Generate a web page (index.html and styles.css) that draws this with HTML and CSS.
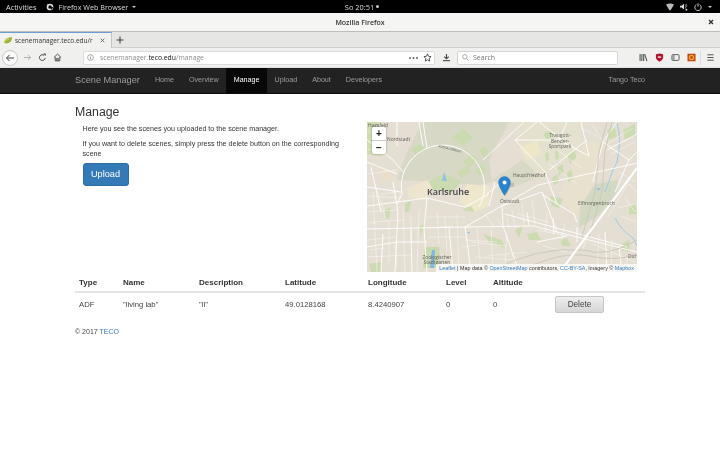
FILE: index.html
```html
<!DOCTYPE html>
<html lang="en">
<head>
<meta charset="utf-8">
<title>Mozilla Firefox</title>
<link rel="stylesheet" href="styles.css">
</head>
<body>
<header class="gnome">
  <div class="gnome-left">
    <span class="gnome-text">Activities</span>
    <span class="gnome-app">
      <svg class="fx-logo" viewBox="0 0 10 10"><circle cx="5" cy="5" r="3.2" fill="none" stroke="#ddd" stroke-width="2"/><path d="M1 1.5 L4 3 L2 5z" fill="#ddd"/><path d="M7 9 L9 5 L5.5 5z" fill="#111"/></svg>
      <span class="gnome-text gnome-app-name">Firefox Web Browser</span>
      <i class="caret"></i>
    </span>
  </div>
  <div class="gnome-clock"><span class="gnome-text">So 20:51</span><i class="dot"></i></div>
  <div class="gnome-right">
    <svg class="sys" viewBox="0 0 10 9"><path d="M0 1.5 Q5 -1 10 1.5 L5.8 8.5 H4.2z" fill="#bbb"/></svg>
    <svg class="sys" viewBox="0 0 10 9"><path d="M0 3 H2 L5 .5 V7.5 L2 5 H0z" fill="#ddd"/><path d="M6.5 1.5 Q8 4 6.5 6.5 M7.5 0.5 Q9.5 4 7.5 5" stroke="#888" fill="none"/><rect x="7" y="6.8" width="2" height="2" fill="#eee"/></svg>
    <svg class="sys" viewBox="0 0 10 10"><path d="M3 2 A4 4 0 1 0 7 2" fill="none" stroke="#ddd" stroke-width="1.1"/><path d="M5 .5 V4.5" stroke="#ddd" stroke-width="1.1"/></svg>
    <i class="caret"></i>
  </div>
</header>

<div class="titlebar">
  <span class="title">Mozilla Firefox</span>
  <svg class="close" viewBox="0 0 6 6"><path d="M1 1 L5 5 M5 1 L1 5" stroke="#333" stroke-width="1.4"/></svg>
</div>

<div class="tabstrip">
  <div class="tab">
    <svg class="favicon" viewBox="0 0 9 8"><path d="M0 7 Q0 2 8 1 Q8 7 2 7.5z" fill="#9cb52f"/><path d="M0 7 Q1 4 5 3" stroke="#e3d35a" fill="none"/></svg>
    <span class="tab-label">scenemanager.teco.edu/r</span>
    <svg class="tab-x" viewBox="0 0 6 6"><path d="M.8 .8 L5.2 5.2 M5.2 .8 L.8 5.2" stroke="#555" stroke-width="1"/></svg>
  </div>
  <svg class="plus" viewBox="0 0 8 8"><path d="M4 .5 V7.5 M.5 4 H7.5" stroke="#444" stroke-width="1.1"/></svg>
</div>

<div class="toolbar">
  <div class="nav-btns">
    <span class="back"><svg viewBox="0 0 10 10"><path d="M9 5 H1.5 M4.5 2 L1.5 5 L4.5 8" fill="none" stroke="#444" stroke-width="1"/></svg></span>
    <svg class="tool" viewBox="0 0 10 10"><path d="M1 5 H8.5 M5.5 2 L8.5 5 L5.5 8" fill="none" stroke="#aaa" stroke-width="1"/></svg>
    <svg class="tool" viewBox="0 0 10 10"><path d="M8 5.5 A3.2 3.2 0 1 1 6.8 2.6" fill="none" stroke="#444" stroke-width="1.1"/><path d="M5.8 .6 H8.6 V3.4z" fill="#444"/></svg>
    <svg class="tool" viewBox="0 0 10 10"><path d="M1 5 L5 1.2 L9 5 M2.5 4.5 V8.7 H7.5 V4.5 M4.2 8.7 V6 H5.8 V8.7" fill="none" stroke="#444" stroke-width="1"/></svg>
  </div>
  <div class="urlbar">
    <svg class="info" viewBox="0 0 8 8"><circle cx="4" cy="4" r="3.3" fill="none" stroke="#777" stroke-width=".7"/><path d="M4 3.4 V6 M4 2 V2.8" stroke="#777" stroke-width=".8"/></svg>
    <span class="url"><span class="url-dim">scenemanager.</span><span class="url-host">teco.edu</span><span class="url-dim">/manage</span></span>
    <svg class="url-dots" viewBox="0 0 9 2"><circle cx="1" cy="1" r=".9" fill="#555"/><circle cx="4.5" cy="1" r=".9" fill="#555"/><circle cx="8" cy="1" r=".9" fill="#555"/></svg>
    <svg class="tool" viewBox="0 0 10 10"><path d="M5 1 L6.2 3.7 L9 4 L6.9 6 L7.5 9 L5 7.5 L2.5 9 L3.1 6 L1 4 L3.8 3.7z" fill="none" stroke="#444" stroke-width="1"/></svg>
  </div>
  <svg class="tool dl" viewBox="0 0 10 10"><path d="M5 1 V6 M2.5 4 L5 6.5 L7.5 4" fill="none" stroke="#444" stroke-width="1.2"/><path d="M1 8.5 H9" stroke="#444" stroke-width="1.2"/></svg>
  <div class="searchbar">
    <svg class="lens" viewBox="0 0 8 8"><circle cx="3.2" cy="3.2" r="2.5" fill="none" stroke="#888" stroke-width=".8"/><path d="M5 5 L7.5 7.5" stroke="#888" stroke-width=".8"/></svg>
    <span class="search-text">Search</span>
  </div>
  <div class="tool-icons">
    <svg class="tool" viewBox="0 0 10 10"><path d="M1.2 1 V9 M3.2 1 V9 M5.2 1 V9" stroke="#555" stroke-width="1.2"/><path d="M6.3 1.2 L8.8 9" stroke="#555" stroke-width="1.2"/></svg>
    <svg class="tool" viewBox="0 0 10 10"><path d="M1 1.5 L5 .5 L9 1.5 V5.5 Q8.5 8 5 9.7 Q1.5 8 1 5.5z" fill="#b5132b"/><rect x="3" y="3.5" width="4" height="2" rx=".8" fill="#f3c6cc"/></svg>
    <svg class="tool" viewBox="0 0 10 10"><rect x="1" y="1.8" width="8" height="6.4" rx="1.2" fill="none" stroke="#555"/><path d="M1.5 2.3 H4 V7.7 H1.5z" fill="#999"/></svg>
    <svg class="tool" viewBox="0 0 10 10"><rect x=".5" y=".8" width="9" height="8.4" fill="#c5491a"/><circle cx="5" cy="5" r="2.3" fill="none" stroke="#f0b428" stroke-width="1.3"/></svg>
    <span class="tool-sep"></span>
    <svg class="tool" viewBox="0 0 10 10"><path d="M1.5 2 H8.5 M1.5 5 H8.5 M1.5 8 H8.5" stroke="#555" stroke-width="1.1"/></svg>
  </div>
</div>

<nav class="navbar">
  <div class="nav-left">
    <a class="brand">Scene Manager</a>
    <a class="nav-item">Home</a>
    <a class="nav-item">Overview</a>
    <a class="nav-item active">Manage</a>
    <a class="nav-item">Upload</a>
    <a class="nav-item">About</a>
    <a class="nav-item">Developers</a>
  </div>
  <a class="nav-user">Tango Teco</a>
</nav>

<main class="container">
  <div class="top-row">
    <section class="intro">
      <h1 class="heading">Manage</h1>
      <div class="intro-body">
        <p class="para">Here you see the scenes you uploaded to the scene manager.</p>
        <p class="para">If you want to delete scenes, simply press the delete button on the corresponding scene</p>
        <a class="btn-upload">Upload</a>
      </div>
    </section>
    <div class="map">
      <svg class="map-art" viewBox="0 0 270 150">
        <rect width="270" height="150" fill="#e5ded3"/>
        <path d="M0 0 H14 V34 L0 32z" fill="#cfdcb0"/>
        <path d="M55 0 H142 L122 38 L125 60 L110 64 L76 60 L30 58 L40 30z" fill="#d7d9c6"/>
        <path d="M125 58 L155 38 L178 53 L146 65z" fill="#d7d9c6"/>
        <path d="M228 62 L251 58 L250 70 L232 93 L212 106 L213 85z" fill="#d2d9c2"/>
        <path d="M148 0 L216 0 L212 28 L176 58 L156 38z" fill="#e4e1cf"/>
        <path d="M216 20 L236 20 L226 60 L208 96 L192 72z" fill="#e8e1ce"/>
        <path d="M40 66 L60 58 L66 66 L58 78 L42 76z" fill="#ede5cd"/>
        <path d="M100 62 L122 64 L122 84 L108 90 L92 80z" fill="#efe7cc"/>
        <path d="M62 60 Q78 46 94 60 L86 70 L66 68z" fill="#ccdab2"/>
        <path d="M14 42 L26 56 L16 60z" fill="#ecdfc9"/>
        <path d="M152 26 L170 18 L174 32 L160 38z" fill="#ede6c9"/>
        <path d="M58 125 L72 125 L74 146 L56 146z" fill="#c9d9ae"/>
        <g fill="#c9dbac" opacity=".85">
          <path d="M84 16 L96 6 L106 16 L96 24z"/>
          <path d="M44 27 L54 22 L58 28 L50 33z"/>
          <path d="M96 40 L104 32 L110 38 L102 46z"/>
          <path d="M90 50 L100 44 L104 50 L94 56z"/>
          <path d="M108 48 L116 42 L120 50 L112 54z"/>
          <path d="M112 28 L118 24 L122 32 L116 35z"/>
          <path d="M176 12 L184 8 L188 14 L180 18z"/>
          <path d="M240 8 L247 4 L250 14 L243 18z"/>
          <path d="M256 8 L268 2 L268 14 L258 18z"/>
          <path d="M200 34 L208 28 L209 36 L203 42z"/>
          <path d="M190 46 L195 42 L197 50 L192 53z"/>
          <path d="M185 56 L190 52 L192 60 L187 63z"/>
          <path d="M200 50 L205 48 L206 58 L201 60z"/>
          <path d="M178 32 L181 30 L182 38 L179 40z"/>
          <path d="M188 30 L191 28 L192 36 L189 38z"/>
          <path d="M183 74 L196 77 L192 86 L185 84z"/>
          <path d="M116 112 L135 118 L138 126 L122 120z"/>
          <path d="M18 88 L24 85 L22 96 L18 98z"/>
          <path d="M38 82 L44 78 L42 90 L38 90z"/>
          <path d="M52 105 L58 102 L54 115z"/>
          <path d="M94 88 L104 84 L108 90z"/>
          <path d="M148 108 L156 104 L152 116z"/>
          <path d="M192 118 L200 116 L204 124 L196 124z"/>
          <path d="M268 82 L262 84 L262 92 L270 92z"/>
          <path d="M255 122 L262 118 L263 130 L255 128z"/>
          <path d="M160 112 L170 110 L174 118 L162 118z"/>
          <path d="M2 142 L14 140 L14 150 L4 150z"/>
        </g>
        <path d="M250 1 Q255 18 250 40 L246 48 M246 48 L238 70" fill="none" stroke="#9ccbe8" stroke-width="1"/>
        <path d="M248 96 Q254 108 266 116 L270 124" fill="none" stroke="#9ccbe8" stroke-width="1"/>
        <path d="M77 50 Q79 55 80 59 L75 59z" fill="#8fc3e6"/>
        <path d="M65 128 L68 128 L67 146 L63 146z" fill="#7fb9e2"/>
        <path d="M230 66 L234 66 L231 69z M190 40 L192 40 L191 42z M100 110 L103 110 L102 112z" fill="#8fc3e6"/>
        <g fill="none" stroke="#fff" stroke-width=".45" opacity=".9">
          <path d="M0 8 L16 18 M0 28 L18 24 M0 52 L30 48 M8 62 L20 100 M0 90 L30 88 M0 118 L30 115 M0 135 L44 133 M22 100 L22 140 M36 85 L38 150 M52 88 L50 150 M70 90 L72 122 M90 92 L92 150 M60 95 L98 95 M62 115 L100 115 M110 106 L114 150 M124 106 L126 150 M104 120 L140 124 M108 135 L148 138 M145 88 L148 106 M155 80 L157 103 M165 78 L168 103 M180 90 L178 110 M198 102 L194 120 M220 112 L216 128 M232 112 L230 150 M245 118 L244 150 M262 130 L258 150 M240 22 L266 6 M244 32 L268 20 M252 50 L268 60 M262 60 L240 96 M180 6 L208 26 M190 28 L215 46 M182 42 L210 62"/>
          <path d="M6 70 L10 150 M14 72 L30 70 M6 100 L36 98 M44 92 L44 122 M60 106 L86 104 M78 94 L80 130 M98 118 L130 120 M118 92 L128 106 M130 96 L136 106 M140 96 L142 106 M150 92 L182 100 M170 108 L200 114 M176 124 L200 130 M120 134 L160 130 M140 112 L138 146 M250 86 L268 82 M254 94 L270 100 M225 2 L236 20 M214 6 L230 14 M262 62 L270 70 M258 76 L268 90 M226 122 L268 140 M2 74 L34 76 M0 100 L10 102 M28 120 L30 146 M4 128 L18 126 M95 125 L110 123"/>
        </g>
        <g fill="none" stroke="#fff" stroke-width=".9">
          <path d="M30 82 L35 72 A41.5 41.5 0 1 1 112 85"/>
          <path d="M56 0 L60 26 M52 0 L56 24"/>
          <path d="M157 0 L116 38"/>
          <path d="M0 18 L26 38 L36 50 M0 40 L30 52"/>
          <path d="M0 84 L60 76 L98 85 L122 72"/>
          <path d="M0 107 L98 105 L171 63 L271 41"/>
          <path d="M28 150 L31 90 L26 60 M60 150 L57 107 L60 76 M98 105 L104 150"/>
          <path d="M135 84 L136 104 L152 150"/>
          <path d="M16 112 L14 150 M44 107 L45 150 M82 106 L86 150"/>
          <path d="M135 84 L175 70 L190 110 M175 72 L190 82 L207 92 L210 100"/>
          <path d="M98 105 L166 104 L270 130 M138 92 L260 125 M160 90 L162 104 M186 96 L187 112 M210 105 L210 120"/>
          <path d="M200 0 L192 18 L222 34 L214 0 M148 18 L192 18 M172 0 L200 22"/>
          <path d="M148 18 L178 50 L190 82 M170 0 L148 18 M182 48 L220 18"/>
          <path d="M236 20 L262 38 L248 70 M250 0 L236 20 L226 60 M240 28 L270 12 M262 38 L270 30"/>
          <path d="M0 125 L30 120 L60 120 M0 65 L34 70 M4 45 L14 90"/>
          <path d="M12 0 L18 28 M30 0 L30 24"/>
          <path d="M128 60 L122 84 M120 72 L134 60"/>
          <path d="M238 110 L240 150 M252 124 L255 150 M170 120 L200 114"/>
        </g>
        <g fill="none" stroke="#cbc6ba" stroke-width=".9">
          <path d="M122 150 Q170 124 216 128 Q240 136 270 118"/>
          <path d="M150 150 Q195 128 222 134 Q250 140 270 132"/>
          <path d="M215 115 L228 70 L232 30 L240 0"/>
          <path d="M222 115 L235 70 L238 30 L245 0"/>
        </g>
        <path d="M193 150 L270 46" fill="none" stroke="#fff" stroke-width="2"/>
        <text class="m-label" x="1" y="5">Hagsfeld</text>
        <text class="m-label" x="20" y="19">Nordstadt</text>
        <text class="m-label m-c" x="193" y="15">Traugott-</text>
        <text class="m-label m-c" x="193" y="20.5">Bender-</text>
        <text class="m-label m-c" x="193" y="26">Sportpark</text>
        <text class="m-label" x="146" y="55">Hauptfriedhof</text>
        <text class="m-label" x="211" y="83">Elfmorgenbruch</text>
        <text class="m-label" x="133" y="81">Oststadt</text>
        <text class="m-city" x="60" y="73">Karlsruhe</text>
        <text class="m-label m-c" x="70" y="137">Zoologischer</text>
        <text class="m-label m-c" x="70" y="141.5">Stadtgarten</text>
        <text class="m-label" x="261" y="136">Dur</text>
        <text class="m-ring" x="71" y="25" transform="rotate(14 71 25)">ADENAUERRING</text>
      </svg>
      <svg class="marker" viewBox="0 0 16 20">
        <path d="M8 20 L12 12 L20 9 L16 6 L8 10z" fill="#7a7a7a" opacity=".28"/>
        <path d="M6.5 19.5 Q.5 10 .5 6.5 A6 6 0 0 1 12.5 6.5 Q12.5 10 6.5 19.5z" fill="#2a84cb" stroke="#1f6fae" stroke-width=".4"/>
        <circle cx="6.5" cy="6.5" r="2" fill="#fff"/>
      </svg>
      <div class="zoom">
        <span class="zoom-btn zoom-plus">+</span>
        <span class="zoom-btn">−</span>
      </div>
      <div class="attrib"><a class="link">Leaflet</a> | Map data © <a class="link">OpenStreetMap</a> contributors, <a class="link">CC-BY-SA</a>, Imagery © <a class="link">Mapbox</a></div>
    </div>
  </div>

  <table class="scenes">
    <thead>
      <tr><th>Type</th><th>Name</th><th>Description</th><th>Latitude</th><th>Longitude</th><th>Level</th><th>Altitude</th><th></th></tr>
    </thead>
    <tbody>
      <tr><td>ADF</td><td>"living lab"</td><td>"ll"</td><td>49.0128168</td><td>8.4240907</td><td>0</td><td>0</td><td><a class="btn-delete">Delete</a></td></tr>
    </tbody>
  </table>

  <footer class="foot">© 2017 <a class="link">TECO</a></footer>
</main>
</body>
</html>
```

FILE: styles.css
```css
* { box-sizing: border-box; }
html, body { margin: 0; padding: 0; }
html { background: #fff; }
body {
  width: 720px;
  height: 450px;
  overflow: hidden;
  background: #fff;
  font-family: "Liberation Sans", Arial, sans-serif;
  color: #333;
  filter: blur(.5px);
}
svg { display: block; flex: none; }
i { display: block; }

/* GNOME top bar */
.gnome {
  height: 13px;
  background: #000;
  display: grid;
  grid-template-columns: 1fr auto 1fr;
  align-items: center;
  padding: 0 6px;
}
.gnome-text { font: 7.4px "Open Sans", sans-serif; color: #ddd; white-space: nowrap; }
.gnome-app-name { font-size: 7.2px; }
.gnome-left { display: flex; align-items: center; gap: 10px; }
.gnome-app { display: flex; align-items: center; gap: 4px; }
.fx-logo { width: 8px; height: 8px; }
.caret { width: 0; height: 0; border: 2.2px solid transparent; border-top: 2.6px solid #ccc; border-bottom: 0; }
.gnome-clock { display: flex; align-items: center; gap: 2px; padding-left: 4px; }
.dot { width: 3px; height: 3px; border-radius: 50%; background: #ccc; }
.gnome-right { display: flex; align-items: center; justify-content: flex-end; gap: 6px; padding-right: 2px; }
.sys { width: 8px; height: 8px; }

/* Window title */
.titlebar {
  height: 19px;
  background: #f5f5f4;
  border-bottom: 1px solid #bdbdbb;
  border-radius: 4px 4px 0 0;
  display: flex;
  align-items: center;
  justify-content: space-between;
  padding: 0 6px 0 12px;
}
.title {
  font: 600 7px "Open Sans", sans-serif;
  color: #333;
  flex: 1;
  text-align: center;
}
.close { width: 6px; height: 6px; }

/* Tabs */
.tabstrip {
  height: 16px;
  background: #e6e6e5;
  border-bottom: 1px solid #cfcfcd;
  display: flex;
  align-items: center;
}
.tab {
  width: 112px;
  height: 16px;
  background: #f1f1f0;
  border-top: 1px solid #6b9fd4;
  border-right: 1px solid #c4c4c2;
  display: flex;
  align-items: center;
  padding: 0 6px 0 4px;
}
.favicon { width: 9px; height: 8px; }
.tab-label {
  font: 6.5px "Open Sans", sans-serif;
  color: #333;
  margin-left: 2px;
  white-space: nowrap;
}
.tab-x { width: 5px; height: 5px; margin-left: auto; }
.plus { width: 8px; height: 8px; margin-left: 4px; }

/* Toolbar */
.toolbar {
  height: 20px;
  background: #f0f0ef;
  display: flex;
  align-items: center;
  border-bottom: 1px solid #e0e0de;
}
.tool { width: 9px; height: 9px; }
.nav-btns { display: flex; align-items: center; width: 83px; padding-left: 2px; gap: 6px; }
.back {
  width: 16px;
  height: 16px;
  border-radius: 50%;
  background: #fafafa;
  border: 1px solid #c8c8c6;
  display: flex;
  align-items: center;
  justify-content: center;
  margin-right: -1.5px;
}
.back svg { width: 10px; height: 10px; }
.urlbar {
  width: 352px;
  height: 14px;
  background: #fff;
  border: 1px solid #dcdcda;
  border-radius: 2px;
  display: flex;
  align-items: center;
  padding: 0 2px 0 3px;
}
.info { width: 7px; height: 7px; }
.url { font: 6.8px "Open Sans", sans-serif; margin-left: 6px; flex: 1; white-space: nowrap; }
.url-dim { color: #8e8e8e; }
.url-host { color: #111; }
.url-dots { width: 9px; height: 2px; margin-right: 5px; }
.dl { margin: 0 6px 0 7px; }
.searchbar {
  width: 161px;
  height: 14px;
  background: #fff;
  border: 1px solid #d4d4d2;
  border-radius: 2px;
  display: flex;
  align-items: center;
  padding-left: 4px;
  gap: 4px;
}
.lens { width: 7px; height: 7px; }
.search-text { font: 7px "Open Sans", sans-serif; color: #777; }
.tool-icons { display: flex; align-items: center; gap: 7px; margin-left: 21px; }
.tool-sep { width: 1px; height: 14px; background: #dcdcda; margin: 0 -2px 0 -3px; }

/* Site navbar */
.navbar {
  height: 26px;
  background: #222;
  border-bottom: 1px solid #0c0c0c;
  display: flex;
  align-items: stretch;
  justify-content: space-between;
  padding: 0 75px;
}
.nav-left { display: flex; align-items: stretch; }
.brand { font-size: 9.2px; color: #9d9d9d; line-height: 25px; margin-right: 7.5px; white-space: nowrap; }
.nav-item { font-size: 7.15px; color: #9d9d9d; line-height: 25px; padding: 0 7.5px; white-space: nowrap; }
.nav-item.active { background: #080808; color: #fff; }
.nav-user { font-size: 7.15px; color: #9d9d9d; line-height: 25px; white-space: nowrap; }

/* Content */
.container { padding-left: 75px; width: 646px; }
.top-row { display: flex; justify-content: space-between; padding-top: 9px; padding-right: 9px; }
.intro { width: 275px; }
.heading { margin: 0; font-size: 12.3px; font-weight: 500; line-height: 18px; color: #333; }
.intro-body { padding-left: 7.5px; padding-top: 3px; }
.para { margin: 0 0 4px; font-size: 7.15px; line-height: 10px; color: #333; }
.para + .para { margin-top: 5px; }
.btn-upload {
  display: block;
  width: 46px;
  height: 23px;
  background: #337ab7;
  border: 1px solid #2e6da4;
  border-radius: 3px;
  color: #fff;
  font-size: 9.2px;
  line-height: 21px;
  text-align: center;
}

/* Map */
.map { position: relative; width: 270px; height: 150px; margin-top: 19px; overflow: hidden; background: #e5ded3; }
.map-art { width: 270px; height: 150px; }
.m-label { font: 4.9px "Open Sans", sans-serif; fill: #5f5f58; }
.m-c { text-anchor: middle; }
.m-city { font: 600 9px "Open Sans", sans-serif; fill: #444; }
.m-ring { font: 3.2px "Open Sans", sans-serif; fill: #666; }
.marker { position: absolute; left: 131px; top: 54px; width: 16px; height: 20px; }
.zoom {
  position: absolute;
  left: 5px;
  top: 5px;
  width: 14px;
  background: #fff;
  border-radius: 2px;
  box-shadow: 0 0 2px rgba(0,0,0,.4);
  display: flex;
  flex-direction: column;
}
.zoom-btn { height: 13px; font: bold 10px/13px "Liberation Sans", sans-serif; color: #222; text-align: center; }
.zoom-plus { border-bottom: 1px solid #ccc; height: 14px; }
.attrib {
  position: absolute;
  right: 0;
  bottom: 0;
  height: 8px;
  padding: 0 3px;
  background: rgba(255,255,255,.75);
  font-size: 5.4px;
  line-height: 8px;
  color: #333;
  white-space: nowrap;
}
.link { color: #337ab7; }

/* Table */
.scenes { width: 570px; border-collapse: collapse; table-layout: fixed; margin-top: 1px; }
.scenes th:nth-child(1) { width: 44px; }
.scenes th:nth-child(2) { width: 76px; }
.scenes th:nth-child(3) { width: 86px; }
.scenes th:nth-child(4) { width: 83px; }
.scenes th:nth-child(5) { width: 78px; }
.scenes th:nth-child(6) { width: 47px; }
.scenes th:nth-child(7) { width: 62px; }
.scenes th {
  font-size: 8px;
  font-weight: bold;
  text-align: left;
  height: 19px;
  padding: 0 4px;
  border-bottom: 2px solid #e4e4e4;
  color: #333;
}
.scenes td {
  font-size: 7.7px;
  height: 23px;
  padding: 0 4px;
  color: #444;
}
.btn-delete {
  display: block;
  width: 49px;
  height: 17px;
  background: linear-gradient(#eeeeee, #d6d6d6);
  border: 1px solid #c6c6c6;
  border-radius: 2px;
  font-size: 8.2px;
  line-height: 16px;
  text-align: center;
  color: #444;
}
.foot { font-size: 7px; line-height: 10px; margin-top: 12px; color: #444; }
```
